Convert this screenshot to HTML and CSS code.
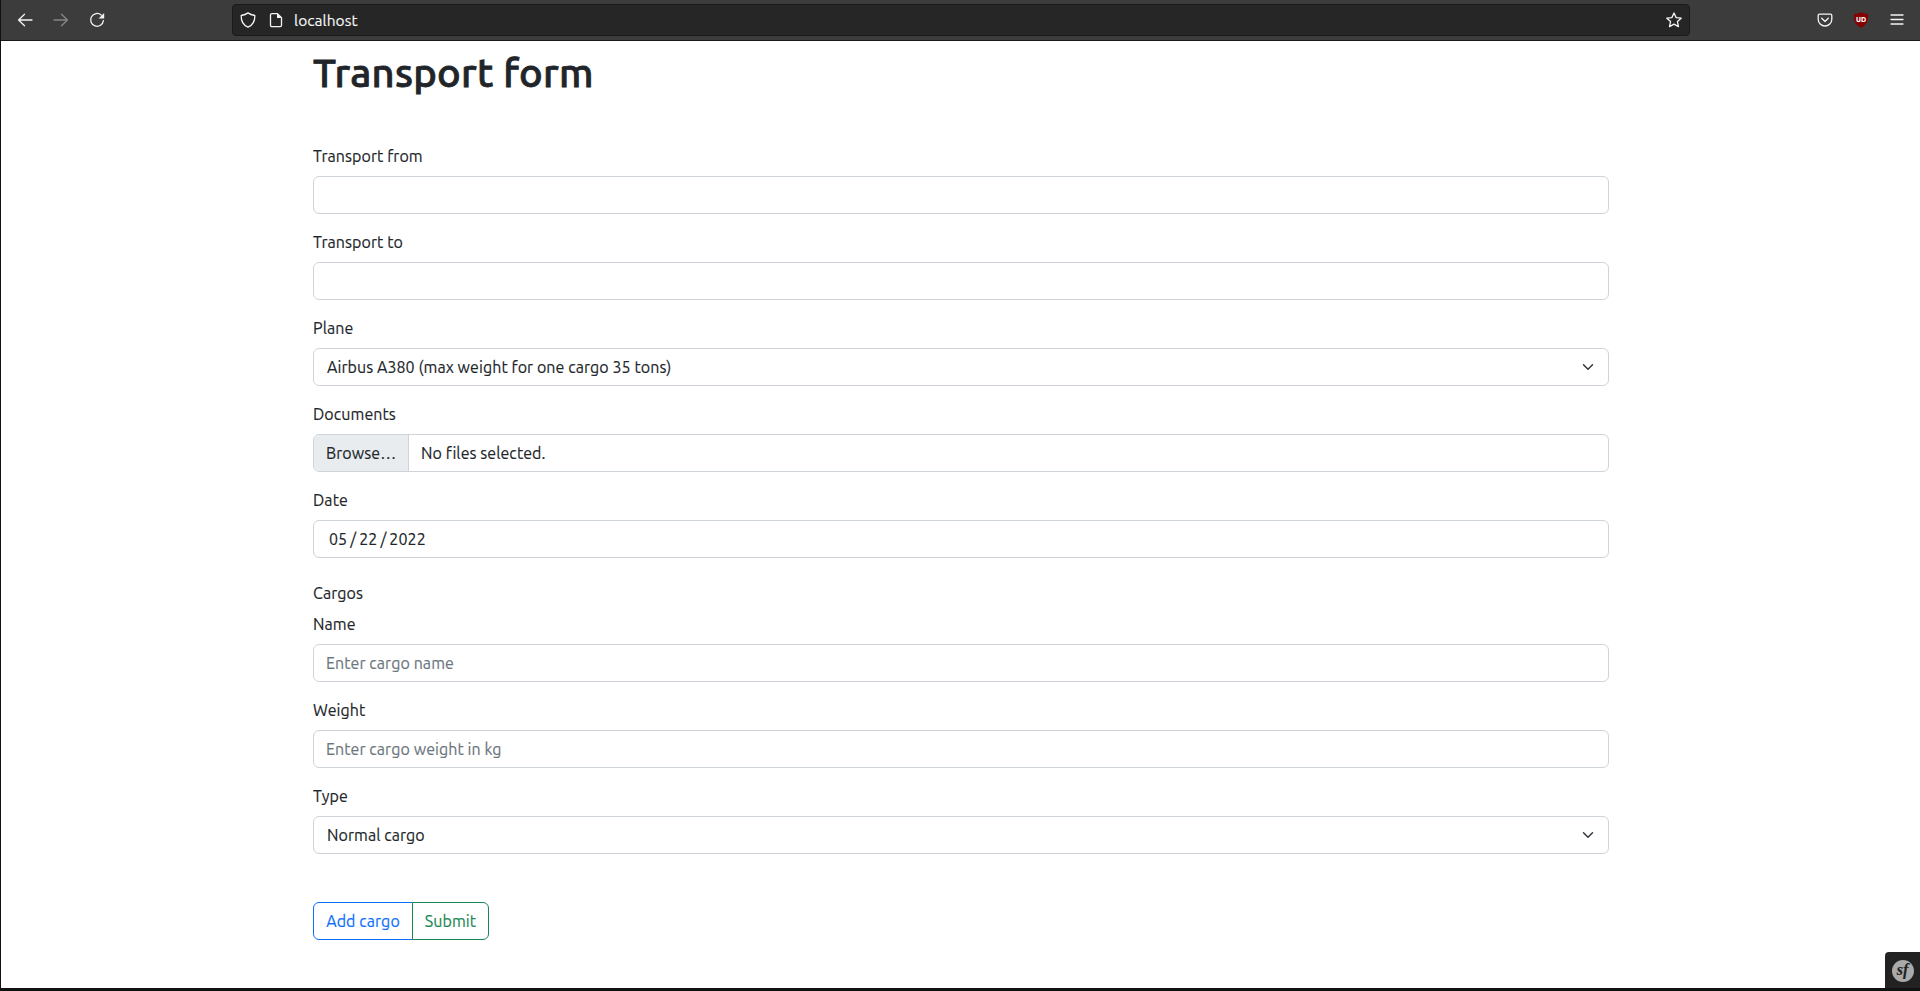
FILE: index.html
```html
<!DOCTYPE html>
<html lang="en">
<head>
<meta charset="utf-8">
<title>Transport form</title>
<link rel="stylesheet" href="styles.css">
</head>
<body>
<div class="window">
  <header class="toolbar">
    <nav class="nav">
      <svg class="icon" viewBox="0 0 16 16"><path d="M15 8H1.5M7.5 2.2L1.6 8l5.9 5.8"/></svg>
      <svg class="icon dim" viewBox="0 0 16 16"><path d="M1 8h13.5M8.500 2.200L14.400 8l-5.900 5.800"/></svg>
      <svg class="icon" viewBox="0 0 16 16"><path d="M12.2 3A6.4 6.4 0 1 0 14.4 8.6"/><path class="solid" d="M15.2 1v5.600H9.600z"/></svg>
    </nav>
    <div class="urlbar">
      <svg class="icon" viewBox="0 0 16 16"><path d="M8 .9C6.300 2.100 3.900 3 1.200 3.500 1 8.500 2.500 12.800 8 15.200 13.500 12.800 15 8.500 14.800 3.500 12.100 3 9.700 2.100 8 .9z"/></svg>
      <svg class="icon" viewBox="0 0 16 16"><path d="M3.800 1.700h5.700l4 4v7.600a1.300 1.300 0 0 1-1.300 1.300H3.800a1.300 1.300 0 0 1-1.300-1.300V3a1.300 1.300 0 0 1 1.300-1.300z"/><path class="solid" d="M9 1.500V6h4.500z"/></svg>
      <span class="url">localhost</span>
      <svg class="icon star" viewBox="0 0 16 16"><path d="M8 1l2.150 4.600 5.050.6-3.750 3.400 1 5L8 12.100l-4.450 2.500 1-5L.8 6.200l5.050-.6z"/></svg>
    </div>
    <div class="tools">
      <svg class="icon" viewBox="0 0 16 16"><path d="M2.500 2.200h11a1.300 1.300 0 0 1 1.300 1.300V7.200a6.800 6.800 0 0 1-13.600 0V3.500a1.300 1.300 0 0 1 1.300-1.300z"/><path d="M4.700 6.300L8 9.500l3.300-3.200"/></svg>
      <span class="blocker">
        <svg viewBox="0 0 16 16"><path d="M8 .3C10 1.600 12.500 2 15 2 15.200 9 14 12.800 8 15.800 2 12.800.8 9 1 2 3.500 2 6 1.600 8 .3z"/></svg>
        <b>UD</b>
      </span>
      <svg class="icon" viewBox="0 0 16 16"><path d="M2 3h12M2 7.500h12M2 12h12"/></svg>
    </div>
  </header>

  <main class="page">
    <h1 class="title">Transport form</h1>
    <form class="form">
      <div class="field"><label class="label">Transport from</label><div class="control"></div></div>
      <div class="field"><label class="label">Transport to</label><div class="control"></div></div>
      <div class="field"><label class="label">Plane</label>
        <div class="control select"><span>Airbus A380 (max weight for one cargo 35 tons)</span>
          <svg class="chevron" viewBox="0 0 16 16"><path d="M2 5l6 6 6-6"/></svg></div></div>
      <div class="field"><label class="label">Documents</label>
        <div class="control file"><span class="browse">Browse…</span><span>No files selected.</span></div></div>
      <div class="field"><label class="label">Date</label>
        <div class="control date"><span>05</span><span>/</span><span>22</span><span>/</span><span>2022</span></div></div>
      <div class="legend">Cargos</div>
      <div class="field"><label class="label">Name</label><div class="control placeholder">Enter cargo name</div></div>
      <div class="field"><label class="label">Weight</label><div class="control placeholder">Enter cargo weight in kg</div></div>
      <div class="field"><label class="label">Type</label>
        <div class="control select"><span>Normal cargo</span>
          <svg class="chevron" viewBox="0 0 16 16"><path d="M2 5l6 6 6-6"/></svg></div></div>
      <div class="actions">
        <button type="button" class="btn add">Add cargo</button><button type="button" class="btn submit">Submit</button>
      </div>
    </form>
  </main>
  <div class="debug"><span class="debug-logo"><i>sf</i></span></div>
</div>
</body>
</html>
```
FILE: styles.css
```css
* { box-sizing: border-box; }
body {
  margin: 0;
  background: #fff;
  color: #212529;
  font: 16px/24px Ubuntu, "Noto Sans", sans-serif;
  letter-spacing: 0.07px;
  -webkit-text-stroke: 0.15px;
}
.window {
  position: relative;
  height: 991px;
  border-left: 1px solid #111;
  border-bottom: 3px solid #111;
  overflow: hidden;
}

/* Browser toolbar */
.toolbar {
  display: flex;
  align-items: center;
  height: 41px;
  padding-right: 15px;
  background: #3c3c3c;
  border-bottom: 1px solid #18181a;
}
.icon {
  flex: none;
  width: 16px;
  height: 16px;
  fill: none;
  stroke: #f4f4f4;
  stroke-width: 1.3;
  stroke-linecap: round;
  stroke-linejoin: round;
}
.icon .solid { fill: #f4f4f4; stroke: none; }
.dim { opacity: 0.4; }
.nav { display: flex; gap: 20px; width: 231px; padding-left: 16px; }
.urlbar {
  display: flex;
  align-items: center;
  width: 1458px;
  height: 32px;
  padding: 0 7px;
  gap: 12px;
  background: #262626;
  border: 1px solid #1a1a1a;
  border-radius: 4px;
}
.url { color: #f6f6f6; font-size: 15.5px; margin-left: -2px; padding-top: 1px; }
.star { margin-left: auto; }
.tools { display: flex; gap: 20px; margin-left: auto; }
.blocker { position: relative; display: block; width: 16px; height: 16px; }
.blocker svg { display: block; fill: #850000; }
.blocker b {
  position: absolute;
  inset: 0;
  color: #fff;
  font-size: 7px;
  line-height: 15px;
  text-align: center;
}

/* Form */
.page { width: 1296px; margin: 8px 0 0 312px; }
.title {
  margin: 0 0 47px;
  font-size: 40px;
  font-weight: 500;
  line-height: 48px;
  letter-spacing: 0.25px;
  -webkit-text-stroke: 0.8px #212529;
}
.field { margin-bottom: 16px; }
.label { display: block; margin-bottom: 8px; }
.control {
  display: flex;
  align-items: center;
  height: 38px;
  padding: 0 12px;
  border: 1px solid #ced4da;
  border-radius: 6px;
  overflow: hidden;
}
.select { justify-content: space-between; padding-left: 13px; }
.chevron {
  width: 16px;
  height: 12px;
  fill: none;
  stroke: #343a40;
  stroke-width: 2;
  stroke-linecap: round;
  stroke-linejoin: round;
}
.file { padding: 0; gap: 12px; }
.browse {
  width: 95px;
  height: 36px;
  padding: 0 12px;
  background: #e9ecef;
  border-right: 1px solid #ced4da;
  line-height: 36px;
  white-space: nowrap;
}
.date { padding-left: 15px; gap: 3px; }
.placeholder { color: #6c757d; }
.legend { margin: 23px 0 7px; }
.actions { display: flex; margin-top: 48px; }
.btn {
  height: 38px;
  padding: 0;
  background: #fff;
  border: 1px solid;
  font: inherit;
  letter-spacing: inherit;
}
.add { width: 100px; color: #0d6efd; border-radius: 6px 0 0 6px; }
.submit { width: 77px; margin-left: -1px; color: #198754; border-radius: 0 6px 6px 0; }

/* Debug toolbar toggle */
.debug {
  position: absolute;
  right: 0;
  bottom: 0;
  display: flex;
  align-items: center;
  justify-content: center;
  width: 35px;
  height: 36px;
  padding-top: 2px;
  background: #222;
  border-radius: 4px 0 0 0;
}
.debug-logo {
  width: 22px;
  height: 22px;
  border-radius: 50%;
  background: #aaa;
  color: #222;
  font: bold 16px/19px "Liberation Serif", serif;
  text-align: center;
}
```
